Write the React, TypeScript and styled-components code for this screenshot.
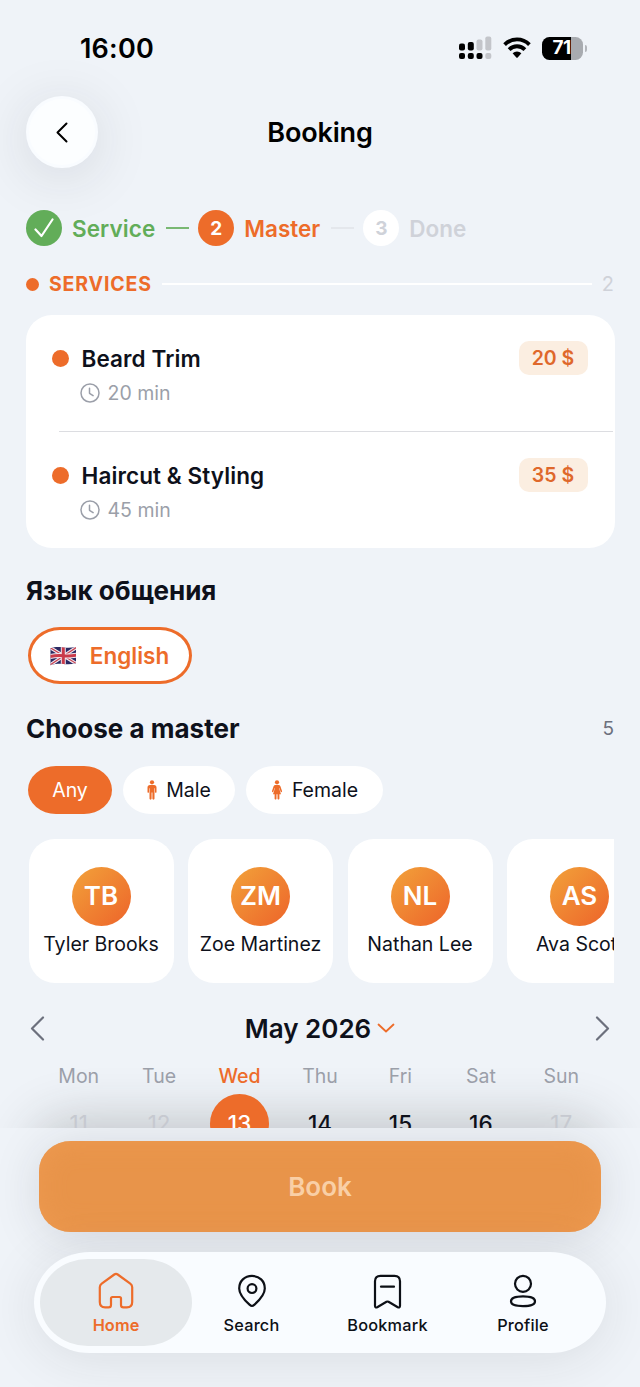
import React from "react";
import styled, { createGlobalStyle } from "styled-components";

const c = {
  bg: "#eff3f8",
  orange: "#ed6c2a",
  green: "#62ad59",
  ink: "#0e111b",
  gray: "#9b9fa9",
  faint: "#cfd2d9",
};

const Global = createGlobalStyle`
  * { box-sizing: border-box; }
  body { margin: 0; background: ${c.bg}; font-family: Inter, "Noto Sans", sans-serif; color: ${c.ink}; }
  button { font: inherit; color: inherit; border: 0; background: none; padding: 0; margin: 0; }
  svg { display: block; flex: none; }
`;

const Screen = styled.div`
  width: 640px;
  height: 1387px;
  display: flex;
  flex-direction: column;
  overflow: hidden;
  background: ${c.bg};
`;

const Label = styled.span<{ $size: number; $weight?: number; $color?: string; $track?: number; $drop?: number }>`
  font-size: ${(p) => p.$size}px;
  font-weight: ${(p) => p.$weight ?? 400};
  color: ${(p) => p.$color ?? c.ink};
  letter-spacing: ${(p) => p.$track ?? 0}px;
  padding-top: ${(p) => (p.$drop ?? 0) * 2}px;
  line-height: 1.2;
  white-space: nowrap;
`;

const Scroller = styled.main`
  height: 1128px;
  flex: none;
  overflow: hidden;
  display: flex;
  flex-direction: column;
  position: relative;
  isolation: isolate;
`;

const ScrollShade = styled.div`
  position: absolute;
  z-index: -1;
  left: 40px;
  right: 40px;
  bottom: -70px;
  height: 70px;
  border-radius: 30px;
  box-shadow: 0 0 52px 8px rgba(40, 42, 44, 0.23);
`;

const StatusBar = styled.div`
  height: 96px;
  flex: none;
  display: flex;
  align-items: center;
  justify-content: space-between;
  padding: 0 53px 0 80px;
`;

const StatusIcons = styled.div`
  display: flex;
  align-items: center;
  gap: 11px;
`;

const Battery = styled.div`
  display: flex;
  align-items: center;
  gap: 2px;
`;

const BatteryBody = styled.div`
  width: 41px;
  height: 23px;
  border-radius: 7.5px;
  background: linear-gradient(90deg, #000 29px, #a8abb0 29px);
  display: flex;
  align-items: center;
  justify-content: center;
  padding-right: 2px;
`;

const BatteryTip = styled.div`
  width: 2px;
  height: 7px;
  border-radius: 0 3px 3px 0;
  background: #b3b6bb;
`;

const Header = styled.header`
  height: 72px;
  flex: none;
  display: grid;
  grid-template-columns: 72px 1fr 72px;
  align-items: center;
  justify-items: center;
  padding: 0 26px;
`;

const BackButton = styled.button`
  width: 72px;
  height: 72px;
  border-radius: 50%;
  background: #fcfeff;
  border: 3px solid #f9fcff;
  display: grid;
  place-items: center;
  box-shadow: 0 8px 56px rgba(40, 42, 44, 0.13);
`;

const Steps = styled.div`
  height: 36px;
  flex: none;
  margin: 42px 26px 0;
  display: flex;
  align-items: center;
`;

const StepCircle = styled.div<{ $bg: string; $color: string }>`
  width: 36px;
  height: 36px;
  border-radius: 50%;
  background: ${(p) => p.$bg};
  color: ${(p) => p.$color};
  display: grid;
  place-items: center;
  font-size: 19px;
  font-weight: 700;
  margin-right: 10px;
`;

const StepLine = styled.div<{ $color: string }>`
  width: 23px;
  height: 2px;
  background: ${(p) => p.$color};
  margin: 0 9px 0 11px;
`;

const SectionRow = styled.div`
  height: 24px;
  flex: none;
  margin: 26px 26px 0;
  display: flex;
  align-items: center;
`;

const Dot = styled.i<{ $size: number; $gap?: number }>`
  width: ${(p) => p.$size}px;
  height: ${(p) => p.$size}px;
  margin-right: ${(p) => p.$gap ?? 0}px;
  border-radius: 50%;
  flex: none;
  background: ${c.orange};
`;

const Rule = styled.div`
  flex: 1;
  height: 2px;
  background: #fff;
  margin: 0 10px;
`;

const ServiceCard = styled.section`
  width: 589px;
  height: 233px;
  flex: none;
  margin: 19px 0 0 25.5px;
  background: #fff;
  border-radius: 26px;
  display: flex;
  flex-direction: column;
`;

const Service = styled.div`
  height: 116px;
  padding: 26px 27px 0 26px;
  display: grid;
  grid-template-columns: 30px 1fr auto;
  grid-template-rows: 34px 36px;
  align-items: center;
`;

const Price = styled.div`
  width: 69px;
  height: 34px;
  border-radius: 10px;
  background: #fbeee1;
  display: grid;
  place-items: center;
`;

const Duration = styled.div`
  grid-column: 2 / 4;
  display: flex;
  align-items: center;
  gap: 8px;
  margin-left: -2px;
`;

const CardDivider = styled.hr`
  border: 0;
  margin: 0 2px 0 33px;
  height: 1px;
  background: #dcdde1;
`;

const TitleRow = styled.div<{ $top: number }>`
  height: 34px;
  flex: none;
  margin: ${(p) => p.$top}px 26px 0;
  display: flex;
  align-items: center;
  justify-content: space-between;
`;

const LanguageChip = styled.button`
  width: 164px;
  height: 57px;
  flex: none;
  margin: 19px 0 0 27.5px;
  border: 3px solid ${c.orange};
  border-radius: 32px / 28.5px;
  background: #fff;
  display: flex;
  align-items: center;
  justify-content: center;
  gap: 13px;
`;

const Filters = styled.div`
  height: 48px;
  flex: none;
  margin: 20px 0 0 28px;
  display: flex;
  gap: 11px;
`;

const FilterChip = styled.button<{ $width: number; $active?: boolean }>`
  width: ${(p) => p.$width}px;
  border-radius: 28px / 24px;
  background: ${(p) => (p.$active ? c.orange : "#fff")};
  display: flex;
  align-items: center;
  justify-content: center;
  gap: 9px;
`;

const Masters = styled.div`
  height: 144px;
  flex: none;
  margin: 25px 26px 0;
  padding-left: 2.5px;
  display: flex;
  gap: 14.5px;
  overflow: hidden;
`;

const MasterCard = styled.article`
  width: 145px;
  flex: none;
  border-radius: 26px;
  background: #fff;
  display: flex;
  flex-direction: column;
  align-items: center;
  padding-top: 27.5px;
  gap: 7.5px;
`;

const Avatar = styled.div`
  width: 59px;
  height: 59px;
  border-radius: 50%;
  background: linear-gradient(135deg, #f2a23a, #ed642a);
  display: grid;
  place-items: center;
`;

const MonthRow = styled.div`
  height: 40px;
  flex: none;
  margin: 25px 30px 0;
  display: flex;
  align-items: center;
  justify-content: space-between;
`;

const Month = styled.div`
  display: flex;
  align-items: center;
  gap: 6px;
`;

const Week = styled.div<{ $height: number; $top: number }>`
  height: ${(p) => p.$height}px;
  flex: none;
  margin: ${(p) => p.$top}px 38.5px 0;
  display: grid;
  grid-template-columns: repeat(7, 1fr);
  align-items: center;
  justify-items: center;
`;

const Day = styled.div<{ $selected?: boolean }>`
  width: 59px;
  height: 59px;
  border-radius: 50%;
  background: ${(p) => (p.$selected ? c.orange : "transparent")};
  display: grid;
  place-items: center;
`;

const Footer = styled.footer`
  flex: 1;
  overflow: hidden;
  padding: 13px 34px 0;
  display: flex;
  flex-direction: column;
  align-items: center;
`;

const BookButton = styled.button`
  width: 562px;
  height: 91px;
  flex: none;
  border-radius: 32px / 30px;
  background: #e8944a;
  box-shadow: 0 4px 48px rgba(40, 42, 44, 0.13), inset 0 0 26px #ee9a50;
`;

const TabBar = styled.nav`
  width: 572px;
  height: 101px;
  flex: none;
  margin-top: 20px;
  padding: 7px 6px;
  border-radius: 56px / 50.5px;
  background: #f9fcff;
  box-shadow: 0 6px 54px rgba(40, 42, 44, 0.1);
  display: flex;
  position: relative;
`;

const Tab = styled.button<{ $width: number; $active?: boolean }>`
  width: ${(p) => p.$width}px;
  height: 87px;
  border-radius: 48px / 43.5px;
  background: ${(p) => (p.$active ? "#e5e9ec" : "transparent")};
  display: flex;
  flex-direction: column;
  align-items: center;
  padding-top: 12px;
  gap: 7px;
`;

const Signal = () => (
  <svg width="33" height="24" viewBox="0 0 33 24">
    <g fill="#000">
      <rect x="0" y="7.5" width="6" height="7" rx="2" />
      <rect x="8.8" y="6" width="6" height="8.5" rx="2" />
      <rect x="0" y="17" width="6" height="6" rx="2" />
      <rect x="8.8" y="17" width="6" height="6" rx="2" />
      <rect x="17.5" y="17" width="6" height="6" rx="2" />
    </g>
    <g fill="#c3c5ca">
      <rect x="17.5" y="3.5" width="6" height="11" rx="2" />
      <rect x="26.3" y="0.5" width="6" height="14" rx="2" />
      <rect x="26.3" y="17" width="6" height="6" rx="2" />
    </g>
  </svg>
);

const Wifi = () => (
  <svg width="28" height="22" viewBox="0 0 28 22">
    <g fill="none" stroke="#000" strokeWidth="3.8">
      <path d="M1.600 7.600a17.500 17.500 0 0 1 24.800 0" />
      <path d="M6.100 12.600a11 11 0 0 1 15.800 0" />
    </g>
    <path d="M9.600 16.200a6.300 6.300 0 0 1 8.800 0L14.700 20.400q-.7.700-1.400 0z" fill="#000" />
  </svg>
);

const Chevron = ({ d, w, h, color, sw }: { d: string; w: number; h: number; color: string; sw: number }) => (
  <svg width={w} height={h} viewBox={`0 0 ${w} ${h}`} fill="none" stroke={color} strokeWidth={sw} strokeLinecap="round" strokeLinejoin="round">
    <path d={d} />
  </svg>
);

const Clock = () => (
  <svg width="20" height="20" viewBox="0 0 20 20" fill="none" stroke={c.gray} strokeWidth="1.5" strokeLinecap="round">
    <circle cx="10" cy="10" r="9" />
    <path d="M9.500 5.300v5l3.600 2.400" strokeLinejoin="round" />
  </svg>
);

const Flag = () => (
  <svg width="27" height="20" viewBox="0 0 27 20">
    <defs>
      <clipPath id="flag">
        <path d="M.5 2.200C5 .6 9 .8 13.500 1.400 18 2 22 1.700 26 .9v16.400c-4 1-8 1.300-12.500.7C9 17.500 5 18 .5 19.200z" />
      </clipPath>
    </defs>
    <g clipPath="url(#flag)">
      <path fill="#2b2a63" d="M0 0h27v20H0z" />
      <path d="M0 1.500 27 18M0 19 27 1" stroke="#f1e8ef" strokeWidth="3.400" />
      <path d="M0 1.500 27 18M0 19 27 1" stroke="#c8404f" strokeWidth="1.200" />
      <path d="M13.300 0v20M0 10.500q7-1.500 13.500-.8T27 9" stroke="#f1e8ef" strokeWidth="5" fill="none" />
      <path d="M13.300 0v20M0 10.500q7-1.500 13.500-.8T27 9" stroke="#c93a4a" strokeWidth="3" fill="none" />
    </g>
  </svg>
);

const Man = () => (
  <svg width="10" height="20" viewBox="0 0 10 20" fill={c.orange}>
    <circle cx="5" cy="2.300" r="2.100" />
    <path d="M3 5h4c1.600 0 2.500.9 2.500 2.400v4.500c0 1.200-1.500 1.200-1.500 0V8.200h-.5V18.500c0 1.500-2.100 1.500-2.100 0v-6h-.8v6c0 1.500-2.100 1.500-2.100 0V8.200H2v3.700c0 1.200-1.500 1.200-1.500 0V7.400C.5 5.900 1.400 5 3 5z" />
  </svg>
);

const Woman = () => (
  <svg width="12" height="20" viewBox="0 0 12 20" fill={c.orange}>
    <circle cx="6" cy="2.300" r="2.100" />
    <path d="M4.600 5h2.800c1.200 0 1.800.6 2.100 1.600l1.500 4.500c.3 1.100-1 1.500-1.400.5L8.300 8.100H8l2 6.200H8.400v4.300c0 1.300-1.900 1.300-1.900 0v-4.300h-1v4.300c0 1.300-1.900 1.300-1.900 0v-4.300H2l2-6.200h-.3l-1.300 3.500c-.4 1-1.700.6-1.400-.5l1.500-4.500C2.800 5.600 3.400 5 4.600 5z" />
  </svg>
);

const iconProps = { width: 38, height: 38, viewBox: "0 0 38 38", fill: "none", strokeWidth: 2.2, strokeLinecap: "round", strokeLinejoin: "round" } as const;

const HomeIcon = () => (
  <svg {...iconProps} stroke={c.orange}>
    <path d="M17.300 3.500c1.100-.8 2.300-.8 3.400 0L33.300 12.700c1.300.9 1.900 1.900 1.900 3.500V31c0 3.600-1.700 5.300-5.300 5.300h-3.400c-1.700 0-2.500-.8-2.500-2.400v-6.400c0-1-.5-1.500-1.500-1.500h-7c-1 0-1.500.5-1.500 1.500v6.400c0 1.600-.8 2.400-2.500 2.400H8.100c-3.600 0-5.300-1.700-5.300-5.300V16.200c0-1.600.6-2.600 1.900-3.500z" />
  </svg>
);

const SearchIcon = () => (
  <svg {...iconProps} stroke="#0d1016">
    <path d="M19 35c-.9 0-1.600-.6-2.500-1.400C10.800 28.400 6.200 23.500 6.200 17.400 6.200 10 11.700 4.900 19 4.900S31.800 10 31.800 17.400c0 6.100-4.600 11-10.300 16.200-.9.800-1.600 1.400-2.500 1.400z" />
    <circle cx="19" cy="17.600" r="4.400" />
  </svg>
);

const BookmarkIcon = () => (
  <svg {...iconProps} stroke="#0d1016">
    <path d="M6 10.300c0-3.700 1.800-5.400 5.500-5.400h14c3.700 0 5.500 1.700 5.500 5.400v24.500c0 1.600-.9 2.100-2.200 1.400l-9.300-5.400c-.7-.4-1.300-.4-2 0l-9.300 5.400c-1.300.7-2.200.2-2.200-1.400z" />
    <path d="M12 15.700h13" />
  </svg>
);

const ProfileIcon = () => (
  <svg {...iconProps} stroke="#0d1016">
    <circle cx="19" cy="12.800" r="8" />
    <path d="M7 30.200c0-3.800 4.500-4.900 12-4.900s12 1.100 12 4.900-4.500 4.900-12 4.900-12-1.100-12-4.900z" />
  </svg>
);

const services = [
  { name: "Beard Trim", price: "20 $", time: "20 min" },
  { name: "Haircut & Styling", price: "35 $", time: "45 min" },
];
const masters = [
  ["TB", "Tyler Brooks"],
  ["ZM", "Zoe Martinez"],
  ["NL", "Nathan Lee"],
  ["AS", "Ava Scott"],
];
const days: [string, string][] = [
  ["Mon", "11"],
  ["Tue", "12"],
  ["Wed", "13"],
  ["Thu", "14"],
  ["Fri", "15"],
  ["Sat", "16"],
  ["Sun", "17"],
];
const tabs = [
  { name: "Home", Icon: HomeIcon, width: 152 },
  { name: "Search", Icon: SearchIcon, width: 119 },
  { name: "Bookmark", Icon: BookmarkIcon, width: 153 },
  { name: "Profile", Icon: ProfileIcon, width: 118 },
];

const dayColor = (i: number) => (i === 2 ? "#fff" : i < 2 || i > 5 ? "#c6c9d0" : c.ink);

export default function App() {
  return (
    <Screen>
      <Global />
      <Scroller>
        <StatusBar>
          <Label $size={27} $weight={600} $color="#000" $track={0.2} $drop={1}>16:00</Label>
          <StatusIcons>
            <Signal />
            <Wifi />
            <Battery>
              <BatteryBody>
                <Label $size={19} $weight={700} $color="#fff" $track={-0.5}>71</Label>
              </BatteryBody>
              <BatteryTip />
            </Battery>
          </StatusIcons>
        </StatusBar>
        <Header>
          <BackButton aria-label="Back">
            <Chevron d="M10.500 1.500 1.500 10.500l9 9" w={12} h={21} color="#000" sw={2} />
          </BackButton>
          <Label $size={27} $weight={600} $color="#000" $track={-0.15} $drop={1}>Booking</Label>
        </Header>

        <Steps>
          <StepCircle $bg={c.green} $color="#fff">
            <Chevron d="M1.500 11.500 7.500 18 18.500 1.500" w={20} h={20} color="#fff" sw={2.2} />
          </StepCircle>
          <Label $size={22.5} $weight={600} $color={c.green} $track={0.08}>Service</Label>
          <StepLine $color="#79b873" />
          <StepCircle $bg={c.orange} $color="#fff">2</StepCircle>
          <Label $size={22.5} $weight={600} $color={c.orange}>Master</Label>
          <StepLine $color="#e4e7ec" />
          <StepCircle $bg="#fff" $color={c.faint}>3</StepCircle>
          <Label $size={22.5} $weight={600} $color={c.faint}>Done</Label>
        </Steps>

        <SectionRow>
          <Dot $size={13} $gap={10} />
          <Label $size={19.5} $weight={700} $color={c.orange} $track={0.85} $drop={0.5}>SERVICES</Label>
          <Rule />
          <Label $size={20} $color={c.faint}>2</Label>
        </SectionRow>

        <ServiceCard>
          {services.map((s, i) => (
            <React.Fragment key={s.name}>
              {i > 0 && <CardDivider />}
              <Service>
                <Dot $size={17} />
                <Label $size={22.5} $weight={600} $track={0.1}>{s.name}</Label>
                <Price>
                  <Label $size={19.5} $weight={600} $color="#df682b" $drop={0.5}>{s.price}</Label>
                </Price>
                <Duration>
                  <Clock />
                  <Label $size={19.5} $color={c.gray} $drop={1}>{s.time}</Label>
                </Duration>
              </Service>
            </React.Fragment>
          ))}
        </ServiceCard>

        <TitleRow $top={26}>
          <Label $size={26} $weight={700}>Язык общения</Label>
        </TitleRow>
        <LanguageChip>
          <Flag />
          <Label $size={22.5} $weight={600} $color={c.orange}>English</Label>
        </LanguageChip>

        <TitleRow $top={28}>
          <Label $size={26} $weight={700}>Choose a master</Label>
          <Label $size={19} $color="#6c707d">5</Label>
        </TitleRow>
        <Filters>
          <FilterChip $width={84} $active>
            <Label $size={19.5} $color="#fff" $drop={1}>Any</Label>
          </FilterChip>
          <FilterChip $width={112}>
            <Man />
            <Label $size={19.5} $drop={1}>Male</Label>
          </FilterChip>
          <FilterChip $width={137}>
            <Woman />
            <Label $size={19.5} $drop={1}>Female</Label>
          </FilterChip>
        </Filters>

        <Masters>
          {masters.map(([initials, name]) => (
            <MasterCard key={name}>
              <Avatar>
                <Label $size={26} $weight={600} $color="#fff">{initials}</Label>
              </Avatar>
              <Label $size={19.5}>{name}</Label>
            </MasterCard>
          ))}
        </Masters>

        <MonthRow>
          <Chevron d="M13 1.500 2 12.500l11 11" w={15} h={25} color="#6c707d" sw={2.2} />
          <Month>
            <Label $size={26} $weight={600} $drop={0.5}>May 2026</Label>
            <Chevron d="M1.500 1.500 9 8.500l7.500-7" w={18} h={10} color={c.orange} sw={1.8} />
          </Month>
          <Chevron d="M2 1.500 13 12.500 2 23.500" w={15} h={25} color="#6c707d" sw={2.2} />
        </MonthRow>
        <Week $height={26} $top={15}>
          {days.map(([d], i) => (
            <Label key={d} $size={19.5} $weight={i === 2 ? 500 : 400} $color={i === 2 ? c.orange : c.gray} $drop={0.5}>{d}</Label>
          ))}
        </Week>
        <Week $height={59} $top={5}>
          {days.map(([d, n], i) => (
            <Day key={d} $selected={i === 2}>
              <Label $size={22.5} $weight={i > 1 && i < 6 ? 500 : 400} $color={dayColor(i)}>{n}</Label>
            </Day>
          ))}
        </Week>
        <ScrollShade />
      </Scroller>

      <Footer>
        <BookButton>
          <Label $size={26} $weight={600} $color="#f9cfa6">Book</Label>
        </BookButton>
        <TabBar>
          {tabs.map(({ name, Icon, width }, i) => (
            <Tab key={name} $width={width} $active={i === 0}>
              <Icon />
              <Label $size={16.3} $weight={i === 0 ? 600 : 500} $color={i === 0 ? c.orange : "#0d1016"} $track={i === 0 ? 0.1 : 0.2}>{name}</Label>
            </Tab>
          ))}
        </TabBar>
      </Footer>
    </Screen>
  );
}
